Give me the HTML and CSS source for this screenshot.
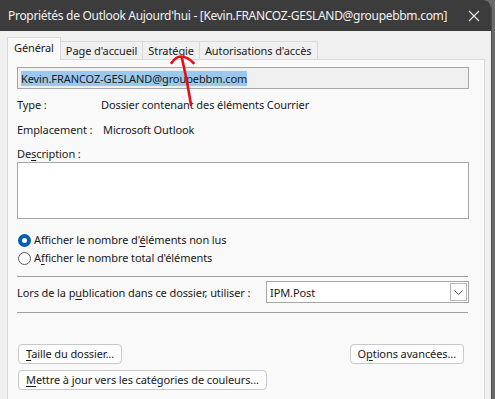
FILE: index.html
```html
<!DOCTYPE html>
<html lang="fr">
<head>
<meta charset="utf-8">
<link rel="stylesheet" href="styles.css">
</head>
<body>
<div class="window">
  <div class="titlebar">
    <span class="title">Propriétés de Outlook Aujourd'hui - [Kevin.FRANCOZ-GESLAND@groupebbm.com]</span>
    <svg class="close" width="12" height="12" viewBox="0 0 12 12"><path d="M1 1 L11 11 M11 1 L1 11" stroke="#e8e8e8" stroke-width="1.1" fill="none"/></svg>
  </div>
  <div class="tabs">
    <div class="tab active">Général</div>
    <div class="tab">Page d'accueil</div>
    <div class="tab">Stratégie</div>
    <div class="tab">Autorisations d'accès</div>
  </div>
  <div class="panel">
    <div class="namefield"><span class="sel">Kevin.FRANCOZ-GESLAND@groupebbm.com</span></div>
    <div class="inforow first"><span class="lbl">Type :</span><span class="val">Dossier contenant des éléments Courrier</span></div>
    <div class="inforow"><span class="lbl">Emplacement :</span><span class="val val2">Microsoft Outlook</span></div>
    <div class="desclabel">De<u>s</u>cription :</div>
    <div class="textarea"></div>
    <div class="radios">
      <div class="radio"><span class="dot checked"></span><span>Afficher le nombre d'<u>é</u>léments non lus</span></div>
      <div class="radio"><span class="dot"></span><span>A<u>f</u>ficher le nombre total d'éléments</span></div>
    </div>
    <div class="sep"></div>
    <div class="postrow">
      <span class="postlbl">Lors de la p<u>u</u>blication dans ce dossier, utiliser :</span>
      <div class="combo"><span>IPM.Post</span><span class="drop"><svg width="9" height="5" viewBox="0 0 9 5"><path d="M0.5 0.5 L4.5 4.5 L8.5 0.5" stroke="#555" fill="none"/></svg></span></div>
    </div>
    <div class="sep sep2"></div>
    <div class="btnrow top">
      <div class="btn"><u>T</u>aille du dossier...</div>
      <div class="btn">O<u>p</u>tions avancées...</div>
    </div>
    <div class="btnrow">
      <div class="btn"><u>M</u>ettre à jour vers les catégories de couleurs...</div>
    </div>
  </div>
</div>
<svg class="annot" width="60" height="60" viewBox="0 0 60 60">
  <path d="M1.5 9 Q 6 2.5 11 2.5 Q 18 3 23.5 9" stroke="#e3101a" stroke-width="2.6" fill="none" stroke-linecap="round"/>
  <path d="M12 4.5 Q 17 26 21 51" stroke="#e3101a" stroke-width="2.6" fill="none" stroke-linecap="round"/>
</svg>
</body>
</html>
```
FILE: styles.css
```css
html, body {
  margin: 0;
  padding: 0;
  background: #6a6a6a;
}
body {
  width: 495px;
  height: 399px;
  overflow: hidden;
  position: relative;
  font-family: "Noto Sans", "Open Sans", sans-serif;
  font-size: 11px;
  letter-spacing: -0.1px;
  color: #1a1a1a;
}
.window {
  width: 492px;
  height: 399px;
  background: #f0f0f0;
  border-top-right-radius: 8px;
  overflow: hidden;
  box-sizing: border-box;
  border-right: 1px solid #4a4a4a;
}
.titlebar {
  height: 31px;
  background: #3c3c3c;
  color: #f2f2f2;
  display: flex;
  align-items: center;
  padding-left: 8px;
  padding-right: 8px;
  font-size: 12px;
  letter-spacing: -0.3px;
}
.title {
  flex: 1;
  white-space: nowrap;
}
.close {
  margin-right: 3px;
}
.tabs {
  display: flex;
  align-items: flex-end;
  margin: 6px 0 0 7px;
  height: 22px;
  position: relative;
  z-index: 1;
}
.tab {
  height: 18px;
  box-sizing: border-box;
  border: 1px solid #d9d9d9;
  border-bottom: none;
  background: #f0f0f0;
  padding: 0 5px;
  line-height: 17px;
  margin-left: -1px;
  white-space: nowrap;
}
.tab.active {
  height: 23px;
  margin-bottom: -1px;
  background: #f9f9f9;
  margin-left: 0;
  padding: 0 6px;
  line-height: 20px;
}
.panel {
  margin-left: 7px;
  width: 478px;
  height: 360px;
  box-sizing: border-box;
  border: 1px solid #d9d9d9;
  background: #f9f9f9;
  padding: 7px 0 0 9px;
}
.namefield {
  width: 452px;
  height: 22px;
  box-sizing: border-box;
  border: 1px solid #a6a6a6;
  background: #f0f0f0;
  display: flex;
  align-items: center;
  padding-left: 3px;
}
.sel {
  background: #99c9ef;
  line-height: 15px;
}
.inforow {
  display: flex;
  height: 25px;
  align-items: center;
}
.inforow.first {
  margin-top: 3px;
}
.lbl {
  width: 84px;
}
.val2 {
  margin-left: 2px;
}
.desclabel {
  height: 19px;
  line-height: 24px;
}
.textarea {
  margin-top: 1px;
  width: 452px;
  height: 57px;
  box-sizing: border-box;
  border: 1px solid #a6a6a6;
  background: #ffffff;
}
.radios {
  margin-top: 12px;
  display: flex;
  flex-direction: column;
}
.radio {
  display: flex;
  align-items: center;
  height: 18px;
  line-height: 16px;
}
.dot {
  width: 13px;
  height: 13px;
  box-sizing: border-box;
  border: 1px solid #5a5a5a;
  border-radius: 50%;
  margin: 0 3px 0 1px;
  background: #fff;
  flex: none;
}
.dot.checked {
  border: 4px solid #005fb8;
  background: #fff;
}
.sep {
  margin-top: 9px;
  width: 451px;
  height: 1px;
  background: #a0a0a0;
}
.postrow {
  display: flex;
  align-items: center;
  margin-top: 4px;
  height: 22px;
}
.postlbl {
  width: 249px;
  white-space: nowrap;
}
.combo {
  width: 203px;
  height: 22px;
  box-sizing: border-box;
  border: 1px solid #a6a6a6;
  background: #fff;
  display: flex;
  align-items: center;
  justify-content: space-between;
  padding-left: 3px;
}
.drop {
  width: 17px;
  height: 18px;
  box-sizing: border-box;
  border: 1px solid #b8b8b8;
  margin-right: 1px;
  display: flex;
  align-items: center;
  justify-content: center;
}
.sep2 {
  margin-top: 9px;
}
.btnrow {
  display: flex;
  justify-content: space-between;
  width: 446px;
  margin-left: 1px;
  margin-top: 6px;
}
.btnrow.top {
  margin-top: 31px;
}
.btn {
  height: 20px;
  box-sizing: border-box;
  border: 1px solid #c8c8c8;
  border-radius: 4px;
  background: #fdfdfd;
  padding: 0 7px;
  line-height: 18px;
  white-space: nowrap;
}
u {
  text-underline-offset: 2px;
}
.annot {
  position: absolute;
  left: 170px;
  top: 54px;
  z-index: 5;
}
```
